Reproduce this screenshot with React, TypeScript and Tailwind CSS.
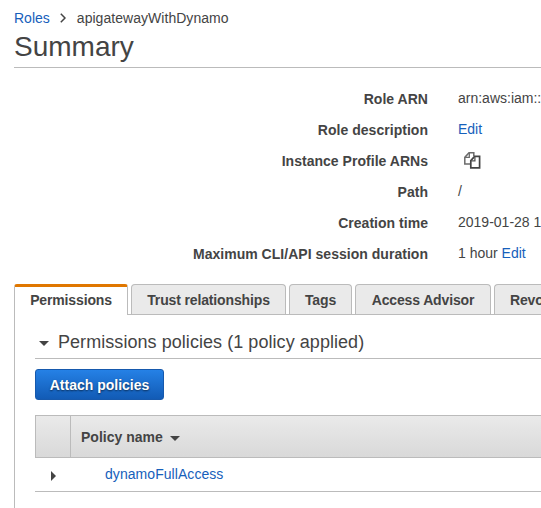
import type { ReactNode } from 'react';

function CopyIcon() {
  return (
    <svg className="ml-[6px] mt-[7px] block" width="17" height="17" viewBox="0 0 17 17" fill="none">
      <path d="M6.5 12H0.8V5.4L5 0.8H9.8V4" stroke="#6b6b6b" strokeWidth="1.5" />
      <path d="M5.3 1V5.4H1" stroke="#6b6b6b" strokeWidth="1.3" />
      <path d="M6.8 8.6L10.6 4.4H15.6V15.8H6.8Z" fill="#fff" stroke="#444" strokeWidth="1.7" />
      <path d="M10.9 4.7V8.8H7" stroke="#555" strokeWidth="1.3" />
    </svg>
  );
}

function Link({ children }: { children: ReactNode }) {
  return <a className="text-[#1660bb]">{children}</a>;
}

const rows: { label: string; value: ReactNode }[] = [
  { label: 'Role ARN', value: 'arn:aws:iam::' },
  { label: 'Role description', value: <Link>Edit</Link> },
  { label: 'Instance Profile ARNs', value: <CopyIcon /> },
  { label: 'Path', value: '/' },
  { label: 'Creation time', value: '2019-01-28 1' },
  { label: 'Maximum CLI/API session duration', value: <>1 hour <Link>Edit</Link></> },
];

const tabs = [
  { label: 'Trust relationships', width: 'w-[155px]' },
  { label: 'Tags', width: 'w-[63px]' },
  { label: 'Access Advisor', width: 'w-[136px]' },
];

export default function App() {
  return (
    <div className="h-[508px] w-[541px] overflow-hidden bg-white pl-[14px] font-['Liberation_Sans',Arial,sans-serif] text-[14px] text-[#444]">
      <nav className="flex h-[30px] items-center pt-[6px] leading-4">
        <Link>Roles</Link>
        <svg className="ml-[10px] mr-[11px]" width="6" height="10" viewBox="0 0 6 10" fill="none">
          <path d="M0.8 0.8L5 5L0.8 9.2" stroke="#444" strokeWidth="1.5" />
        </svg>
        <span className="tracking-[0.003em]">apigatewayWithDynamo</span>
      </nav>
      <h1 className="h-[38px] border-b border-[#bbb] text-[28px] leading-[34px]">Summary</h1>

      <dl className="pt-[15px]">
        {rows.map((row) => (
          <div key={row.label} className="flex h-[31px] leading-[31px]">
            <dt className="w-[414px] shrink-0 pt-px text-right font-bold tracking-[0.002em]">{row.label}</dt>
            <dd className="ml-[30px] whitespace-nowrap">{row.value}</dd>
          </div>
        ))}
      </dl>

      <div className="mt-[15px] flex h-[31px] text-center font-bold leading-[31px]">
        <div className="w-[114px] shrink-0 rounded-t-[3px] border-x border-t-[3px] border-x-[#bbb] border-t-[#e07700] leading-[27px] tracking-[-0.01em]">
          Permissions
        </div>
        <div className="flex flex-1 gap-[3px] border-b border-[#bbb] pl-[3px] leading-[30px] tracking-[-0.01em]">
          {tabs.map((tab) => (
            <div key={tab.label} className={`${tab.width} shrink-0 rounded-t-[4px] border border-b-0 border-[#bbb] bg-[#eaeaea]`}>
              {tab.label}
            </div>
          ))}
          <div className="flex-1 whitespace-nowrap rounded-tl-[4px] border border-b-0 border-r-0 border-[#bbb] bg-[#eaeaea] pl-[15px] text-left">
            Revo
          </div>
        </div>
      </div>

      <section className="h-[193px] border-l border-[#bbb] pl-5">
        <h2 className="flex h-[44px] items-center border-b border-[#bbb] pt-[11px] text-[18px] tracking-[0.003em]">
          <svg className="ml-1 mr-[9px] mt-[3px]" width="10" height="5" viewBox="0 0 10 5">
            <path d="M0 0H10L5 5Z" fill="#444" />
          </svg>
          Permissions policies (1 policy applied)
        </h2>
        <button className="mt-[10px] block h-[31px] w-[129px] rounded-[3px] border border-[#1659ad] bg-linear-to-b from-[#2581e6] to-[#125bb5] pt-px font-bold text-white [text-shadow:0_1px_2px_#00000099]">
          Attach policies
        </button>
        <div className="mt-[15px] flex h-[43px] border border-r-0 border-[#bbb] bg-linear-to-b from-[#eaeaea] to-[#d9d9d9] font-bold">
          <div className="w-[35px] border-r border-[#bbb]" />
          <div className="flex items-center pl-[10px] pt-[2px]">
            Policy name
            <svg className="ml-[7px] mt-[2px]" width="10" height="5" viewBox="0 0 10 5">
              <path d="M0 0H10L5 5Z" fill="#444" />
            </svg>
          </div>
        </div>
        <div className="flex h-[34px] items-center border-b border-[#bbb]">
          <svg className="ml-4 mr-[49px] mt-[2px]" width="5" height="10" viewBox="0 0 5 10">
            <path d="M0 0V10L5 5Z" fill="#444" />
          </svg>
          <span className="tracking-[0.004em]"><Link>dynamoFullAccess</Link></span>
        </div>
      </section>
    </div>
  );
}
